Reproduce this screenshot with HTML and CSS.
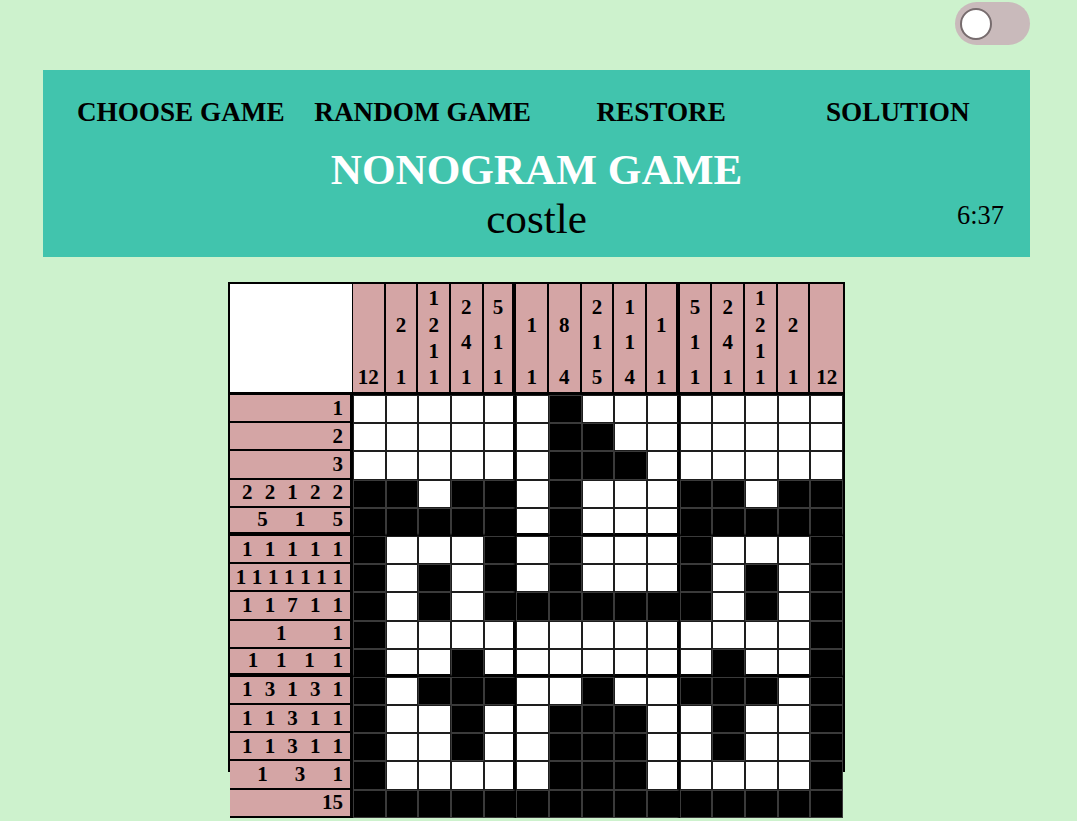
FILE: index.html
```html
<!DOCTYPE html>
<html lang="en">
<head>
<meta charset="utf-8">
<title>Nonogram Game</title>
<link rel="stylesheet" href="styles.css">
</head>
<body>
<div class="page">
  <div class="topbar"><div class="toggle"><span class="knob"></span></div></div>
  <header class="header">
    <nav class="nav">
      <span>CHOOSE GAME</span><span>RANDOM GAME</span><span>RESTORE</span><span>SOLUTION</span>
    </nav>
    <h1 class="title">NONOGRAM GAME</h1>
    <div class="sub"><span></span><span class="name">costle</span><span class="timer">6:37</span></div>
  </header>
  <main class="board">
    <div class="grid">
      <div class="row head">
        <div class="corner"></div>
        <div class="cc"><b>12</b></div>
        <div class="cc"><b>2</b><b>1</b></div>
        <div class="cc"><b>1</b><b>2</b><b>1</b><b>1</b></div>
        <div class="cc"><b>2</b><b>4</b><b>1</b></div>
        <div class="cc"><b>5</b><b>1</b><b>1</b></div>
        <div class="cc"><b>1</b><b>1</b></div>
        <div class="cc"><b>8</b><b>4</b></div>
        <div class="cc"><b>2</b><b>1</b><b>5</b></div>
        <div class="cc"><b>1</b><b>1</b><b>4</b></div>
        <div class="cc"><b>1</b><b>1</b></div>
        <div class="cc"><b>5</b><b>1</b><b>1</b></div>
        <div class="cc"><b>2</b><b>4</b><b>1</b></div>
        <div class="cc"><b>1</b><b>2</b><b>1</b><b>1</b></div>
        <div class="cc"><b>2</b><b>1</b></div>
        <div class="cc"><b>12</b></div>
      </div>
      <div class="row">
        <div class="rc"><b>1</b></div>
        <span class="c"></span><span class="c"></span><span class="c"></span><span class="c"></span><span class="c"></span>
        <span class="c"></span><span class="c f"></span><span class="c"></span><span class="c"></span><span class="c"></span>
        <span class="c"></span><span class="c"></span><span class="c"></span><span class="c"></span><span class="c"></span>
      </div>
      <div class="row">
        <div class="rc"><b>2</b></div>
        <span class="c"></span><span class="c"></span><span class="c"></span><span class="c"></span><span class="c"></span>
        <span class="c"></span><span class="c f"></span><span class="c f"></span><span class="c"></span><span class="c"></span>
        <span class="c"></span><span class="c"></span><span class="c"></span><span class="c"></span><span class="c"></span>
      </div>
      <div class="row">
        <div class="rc"><b>3</b></div>
        <span class="c"></span><span class="c"></span><span class="c"></span><span class="c"></span><span class="c"></span>
        <span class="c"></span><span class="c f"></span><span class="c f"></span><span class="c f"></span><span class="c"></span>
        <span class="c"></span><span class="c"></span><span class="c"></span><span class="c"></span><span class="c"></span>
      </div>
      <div class="row">
        <div class="rc"><b>2</b><b>2</b><b>1</b><b>2</b><b>2</b></div>
        <span class="c f"></span><span class="c f"></span><span class="c"></span><span class="c f"></span><span class="c f"></span>
        <span class="c"></span><span class="c f"></span><span class="c"></span><span class="c"></span><span class="c"></span>
        <span class="c f"></span><span class="c f"></span><span class="c"></span><span class="c f"></span><span class="c f"></span>
      </div>
      <div class="row sep">
        <div class="rc"><b>5</b><b>1</b><b>5</b></div>
        <span class="c f"></span><span class="c f"></span><span class="c f"></span><span class="c f"></span><span class="c f"></span>
        <span class="c"></span><span class="c f"></span><span class="c"></span><span class="c"></span><span class="c"></span>
        <span class="c f"></span><span class="c f"></span><span class="c f"></span><span class="c f"></span><span class="c f"></span>
      </div>
      <div class="row">
        <div class="rc"><b>1</b><b>1</b><b>1</b><b>1</b><b>1</b></div>
        <span class="c f"></span><span class="c"></span><span class="c"></span><span class="c"></span><span class="c f"></span>
        <span class="c"></span><span class="c f"></span><span class="c"></span><span class="c"></span><span class="c"></span>
        <span class="c f"></span><span class="c"></span><span class="c"></span><span class="c"></span><span class="c f"></span>
      </div>
      <div class="row">
        <div class="rc"><b>1</b><b>1</b><b>1</b><b>1</b><b>1</b><b>1</b><b>1</b></div>
        <span class="c f"></span><span class="c"></span><span class="c f"></span><span class="c"></span><span class="c f"></span>
        <span class="c"></span><span class="c f"></span><span class="c"></span><span class="c"></span><span class="c"></span>
        <span class="c f"></span><span class="c"></span><span class="c f"></span><span class="c"></span><span class="c f"></span>
      </div>
      <div class="row">
        <div class="rc"><b>1</b><b>1</b><b>7</b><b>1</b><b>1</b></div>
        <span class="c f"></span><span class="c"></span><span class="c f"></span><span class="c"></span><span class="c f"></span>
        <span class="c f"></span><span class="c f"></span><span class="c f"></span><span class="c f"></span><span class="c f"></span>
        <span class="c f"></span><span class="c"></span><span class="c f"></span><span class="c"></span><span class="c f"></span>
      </div>
      <div class="row">
        <div class="rc"><b>1</b><b>1</b></div>
        <span class="c f"></span><span class="c"></span><span class="c"></span><span class="c"></span><span class="c"></span>
        <span class="c"></span><span class="c"></span><span class="c"></span><span class="c"></span><span class="c"></span>
        <span class="c"></span><span class="c"></span><span class="c"></span><span class="c"></span><span class="c f"></span>
      </div>
      <div class="row sep">
        <div class="rc"><b>1</b><b>1</b><b>1</b><b>1</b></div>
        <span class="c f"></span><span class="c"></span><span class="c"></span><span class="c f"></span><span class="c"></span>
        <span class="c"></span><span class="c"></span><span class="c"></span><span class="c"></span><span class="c"></span>
        <span class="c"></span><span class="c f"></span><span class="c"></span><span class="c"></span><span class="c f"></span>
      </div>
      <div class="row">
        <div class="rc"><b>1</b><b>3</b><b>1</b><b>3</b><b>1</b></div>
        <span class="c f"></span><span class="c"></span><span class="c f"></span><span class="c f"></span><span class="c f"></span>
        <span class="c"></span><span class="c"></span><span class="c f"></span><span class="c"></span><span class="c"></span>
        <span class="c f"></span><span class="c f"></span><span class="c f"></span><span class="c"></span><span class="c f"></span>
      </div>
      <div class="row">
        <div class="rc"><b>1</b><b>1</b><b>3</b><b>1</b><b>1</b></div>
        <span class="c f"></span><span class="c"></span><span class="c"></span><span class="c f"></span><span class="c"></span>
        <span class="c"></span><span class="c f"></span><span class="c f"></span><span class="c f"></span><span class="c"></span>
        <span class="c"></span><span class="c f"></span><span class="c"></span><span class="c"></span><span class="c f"></span>
      </div>
      <div class="row">
        <div class="rc"><b>1</b><b>1</b><b>3</b><b>1</b><b>1</b></div>
        <span class="c f"></span><span class="c"></span><span class="c"></span><span class="c f"></span><span class="c"></span>
        <span class="c"></span><span class="c f"></span><span class="c f"></span><span class="c f"></span><span class="c"></span>
        <span class="c"></span><span class="c f"></span><span class="c"></span><span class="c"></span><span class="c f"></span>
      </div>
      <div class="row">
        <div class="rc"><b>1</b><b>3</b><b>1</b></div>
        <span class="c f"></span><span class="c"></span><span class="c"></span><span class="c"></span><span class="c"></span>
        <span class="c"></span><span class="c f"></span><span class="c f"></span><span class="c f"></span><span class="c"></span>
        <span class="c"></span><span class="c"></span><span class="c"></span><span class="c"></span><span class="c f"></span>
      </div>
      <div class="row">
        <div class="rc"><b>15</b></div>
        <span class="c f"></span><span class="c f"></span><span class="c f"></span><span class="c f"></span><span class="c f"></span>
        <span class="c f"></span><span class="c f"></span><span class="c f"></span><span class="c f"></span><span class="c f"></span>
        <span class="c f"></span><span class="c f"></span><span class="c f"></span><span class="c f"></span><span class="c f"></span>
      </div>
    </div>
  </main>
</div>
</body>
</html>
```

FILE: styles.css
```css
*, *::before, *::after { box-sizing: border-box; }
html, body { margin: 0; padding: 0; }
body {
  background: #cdf2cd;
  font-family: "Liberation Serif", "Times New Roman", serif;
  color: #000;
}
.page { width: 987px; margin-left: 43px; }

.topbar { display: flex; justify-content: flex-end; padding-top: 2px; }
.toggle {
  width: 75px; height: 43px; border-radius: 22px;
  background: #c9babb;
  display: flex; align-items: center; padding-left: 5px;
}
.knob {
  width: 32px; height: 32px; border-radius: 50%;
  background: #fff; border: 2px solid #776c6e;
}

.header {
  margin-top: 25px;
  background: #41c4ad;
  padding: 27px 0 14px;
}
.nav {
  display: grid;
  grid-template-columns: 243.5px 240.25px 236.75px 236.5px;
  margin-left: 16px;
  font-weight: bold;
  font-size: 27.2px;
  text-align: center;
}
.title {
  margin: 17px 0 0;
  font-size: 43.2px;
  font-weight: bold;
  color: #fff;
  text-align: center;
  line-height: normal;
}
.sub { display: grid; grid-template-columns: 1fr auto 1fr; align-items: start; }
.name { font-size: 43.2px; }
.timer { justify-self: end; font-size: 26.4px; margin-top: 6px; padding-right: 26px; }

/* board: the outer frame is a fixed-height box; the grid runs past it */
.board {
  position: relative;
  width: 617px;
  margin: 25px auto 0;
  padding: 2px 2px 0;
}
.board::before {
  content: "";
  position: absolute;
  left: 0; top: 0;
  width: 100%; height: 490px;
  border: 2px solid #000;
  z-index: -1;
}
.grid {
  display: grid;
  grid-template-columns: 123px repeat(15, 1fr);
  grid-template-rows: 111px repeat(15, 28.2px);
  font-size: 21px;
  font-weight: bold;
}
.row { display: contents; }
.corner { background: #fff; border-right: 1px solid #000; border-bottom: 3px solid #000; }
.cc {
  background: #d4a5a5;
  border-right: 2px solid #000;
  border-bottom: 3px solid #000;
  display: flex; flex-direction: column;
  padding-bottom: 3px;
}
.cc b {
  flex: 1;
  display: flex; flex-direction: column; justify-content: flex-end;
  line-height: 23px; text-align: center;
}
.head .cc:nth-child(6), .head .cc:nth-child(11) { border-right-width: 4px; }
.head .cc:last-child { border-right: 0; }

.rc {
  background: #d4a5a5;
  border-right: 3px solid #000;
  border-bottom: 2px solid #000;
  display: flex; align-items: center;
  padding-right: 7px;
}
.rc b { flex: 1; text-align: right; }

.c { background: #fff; border: 1px solid #1e1e1e; }
.c.f { background: #000; border-color: #3a3a3a; }
.row > .c:nth-child(6), .row > .c:nth-child(11) { border-right: 3px solid #000; }
.row.sep > .c { border-bottom: 3px solid #000; }
.row.sep > .rc { border-bottom-width: 4px; }
```
